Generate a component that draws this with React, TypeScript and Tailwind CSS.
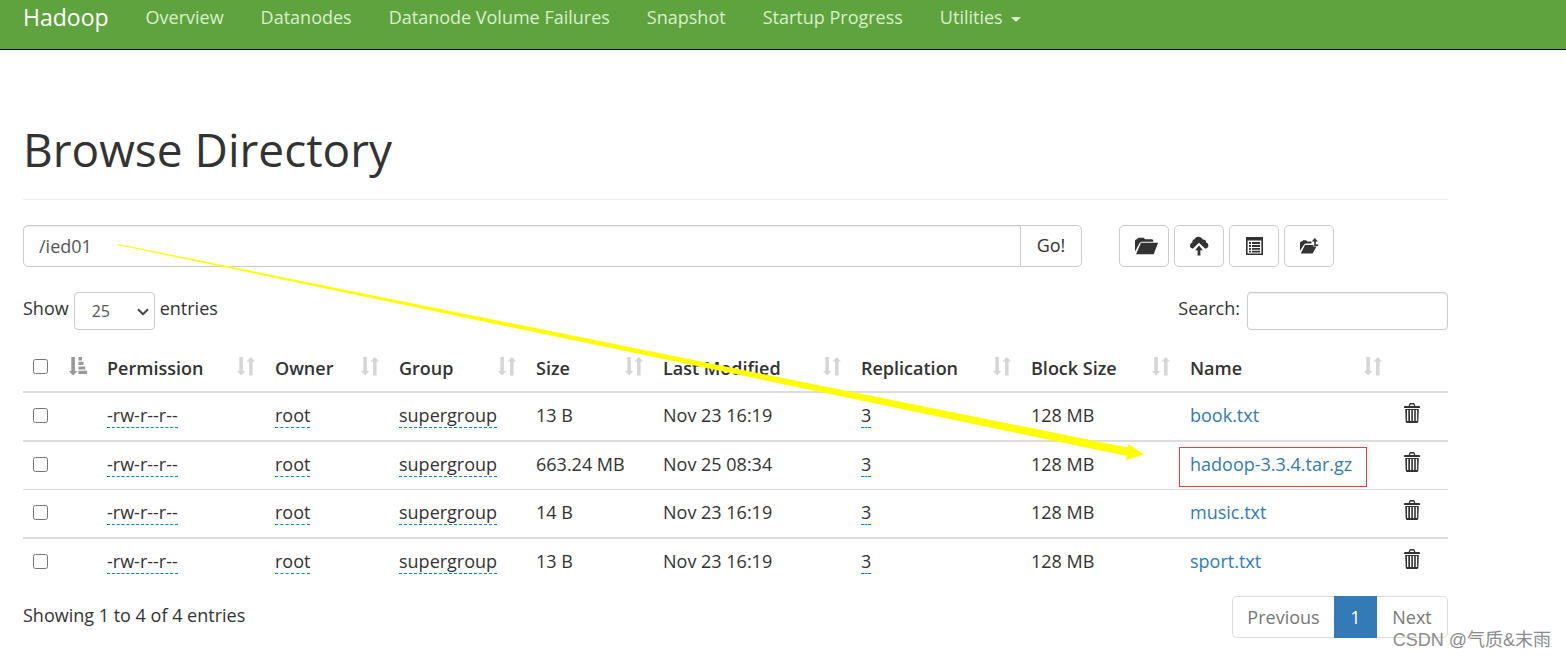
import React from "react";

const navLinks = ["Overview", "Datanodes", "Datanode Volume Failures", "Snapshot", "Startup Progress"];

const columns = [
  { label: "Permission", width: "w-[168px]" },
  { label: "Owner", width: "w-[124px]" },
  { label: "Group", width: "w-[137px]" },
  { label: "Size", width: "w-[127px]" },
  { label: "Last Modified", width: "w-[198px]" },
  { label: "Replication", width: "w-[170px]" },
  { label: "Block Size", width: "w-[159px]" },
  { label: "Name", width: "w-[212px]" },
];

const files = [
  { name: "book.txt", size: "13 B", modified: "Nov 23 16:19", row: "h-[49px]", line: "border-t-2" },
  { name: "hadoop-3.3.4.tar.gz", size: "663.24 MB", modified: "Nov 25 08:34", row: "h-[49px]", line: "border-t-2", marked: true },
  { name: "music.txt", size: "14 B", modified: "Nov 23 16:19", row: "h-[48px]", line: "border-t" },
  { name: "sport.txt", size: "13 B", modified: "Nov 23 16:19", row: "h-[49px]", line: "border-t-2" },
];

function SortIcon() {
  return (
    <svg viewBox="0 0 18 19" className="h-[19px] w-[18px] shrink-0 fill-[#d6d6d6]" aria-hidden="true">
      <path d="M2.3 0h3.6v14H8.4L4.1 18.6 0 14h2.3z" />
      <path d="M12 18.4h3.6V4.6H18L13.8 0 9.5 4.6H12z" />
    </svg>
  );
}

function SortAscIcon() {
  return (
    <svg viewBox="0 0 18 19" className="h-[19px] w-[18px] shrink-0 fill-[#999999]" aria-hidden="true">
      <path d="M2.3 0h3.6v14H8.4L4.1 18.6 0 14h2.3z" />
      <path d="M9.5 0h3.5v3.4H9.5zM9.5 4.7h5v3.4h-5zM9.5 9.4h6.7v3H9.5zM9.5 13.7h8.5v3.4H9.5z" />
    </svg>
  );
}

function FolderOpenIcon() {
  return (
    <svg viewBox="0 0 23 18" className="ml-1 h-[18px] w-[23px] fill-[#333333]" aria-hidden="true">
      <path d="M0 14.5V3.6L1.2 2.3H2L3.2.7h5.6L10 2.2h7.3l1 1.2v1.3H6.4L4.6 5.9z" />
      <path d="M6 5.8h17l-4.3 11.4H1z" />
    </svg>
  );
}

function CloudUploadIcon() {
  return (
    <svg viewBox="0 0 20 20" className="h-5 w-5 fill-[#333333]" aria-hidden="true">
      <path d="M4 12.4 10 6.8l6 5.6h.6a3 3 0 0 0 2.8-2.9 3 3 0 0 0-2.2-2.9 3.2 3.2 0 0 0-3.4-3.1A4.8 4.8 0 0 0 5.4 3.2a2.8 2.8 0 0 0-2 3.2A3.1 3.1 0 0 0 1 9.4a3 3 0 0 0 3 3z" />
      <path d="m10 9.6 3.9 4.6h-2.5v5.2H8.6v-5.2H6.1z" />
    </svg>
  );
}

function ListIcon() {
  return (
    <svg viewBox="0 0 17 18" className="h-[18px] w-[17px] fill-[#333333]" aria-hidden="true">
      <path fillRule="evenodd" d="M0 0h17v18H0zM1.6 3.4v13h13.8v-13z" />
      <path d="M3 5h2v2H3zM6 5h8v2H6zM3 8h2v2H3zM6 8h8v2H6zM3 11h2v1.7H3zM6 11h8v1.7H6zM3 13.7h2v1.7H3zM6 13.7h8v1.7H6z" />
    </svg>
  );
}

function FolderMoveIcon() {
  return (
    <svg viewBox="0 0 19 16" className="h-4 w-[19px] fill-[#333333]" aria-hidden="true">
      <path d="M0 12.8V4.4l1-1h1L3 2.2h3.2l1 1.2h4.2V5.4H5.2L3.8 7z" />
      <path d="M5 7h8.4l-.2 1.6h3.3L12.6 15.6H.8z" />
      <path d="M14.8 0 18 3.4h-2.2v3h2.4v1.5h-4V3.4h-2.5z" />
    </svg>
  );
}

function TrashIcon() {
  return (
    <svg viewBox="0 0 16 20" className="h-5 w-4 fill-[#333333]" aria-hidden="true">
      <path fillRule="evenodd" d="M0 5V3.5L1 3h3.6L5.5.6 6.5 0h3l1 .6.9 2.4H15l1 .5V5zM6 3h4l-.5-1.6h-3z" />
      <path fillRule="evenodd" d="M1.2 6h13.6l-.5 13-1 1H2.7l-1-1zM3 7v11h1.3V7zM6 7v11h1.3V7zM8.9 7v11h1.3V7zM11.8 7v11h1.3V7z" />
    </svg>
  );
}

const tool = "flex h-[42px] w-[50px] items-center justify-center rounded-[5px] border border-[#cccccc] bg-white";
const editable = "border-b border-dashed border-[#0088cc] text-[#333333]";

export default function App() {
  return (
    <div className="relative min-h-screen overflow-hidden bg-white font-['Open_Sans','Noto_Sans',sans-serif] text-lg leading-6 text-[#333333]">
      <nav className="flex h-[50px] items-start gap-[37px] border-b border-[#080808] bg-[#5fa33e] pt-[5px] pl-[23px] whitespace-nowrap text-[#d9f0cd]">
        <a href="#" className="text-[23px] leading-6 font-medium text-white">Hadoop</a>
        {navLinks.map((label) => (
          <a key={label} href="#">{label}</a>
        ))}
        <button type="button" className="flex items-center gap-2">
          Utilities
          <span className="mt-1 border-x-[5px] border-t-[5px] border-x-transparent border-t-[#d9f0cd]" />
        </button>
      </nav>

      <main className="pr-[118px] pl-[23px]">
        <header className="border-b border-[#eeeeee] pt-[67px] pb-[17px]">
          <h1 className="text-[46px] leading-[65px]">Browse Directory</h1>
        </header>

        <div className="mt-[25px] flex gap-[37px]">
          <form className="flex h-[42px] flex-1">
            <input
              aria-label="Directory"
              defaultValue="/ied01"
              className="min-w-0 flex-1 rounded-l-[5px] border border-[#cccccc] px-[15px] text-[#555555] shadow-[inset_0_1px_1px_rgba(0,0,0,0.075)]"
            />
            <button type="button" className="-ml-px w-[62px] rounded-r-[5px] border border-[#cccccc] bg-white pb-0.5">Go!</button>
          </form>
          <div className="flex w-[329px] gap-[5px]">
            <button type="button" aria-label="Open folder" className={tool}><FolderOpenIcon /></button>
            <button type="button" aria-label="Upload" className={tool}><CloudUploadIcon /></button>
            <button type="button" aria-label="List" className={tool}><ListIcon /></button>
            <button type="button" aria-label="Move" className={tool}><FolderMoveIcon /></button>
          </div>
        </div>

        <div className="mt-[25px] flex justify-between">
          <label className="flex gap-[5px]">
            <span className="pt-1">Show</span>
            <span className="relative">
              <select className="h-[38px] w-[81px] appearance-none rounded border border-[#cccccc] bg-white pl-[17px] text-base text-[#555555]">
                <option>25</option>
              </select>
              <svg viewBox="0 0 12 8" className="pointer-events-none absolute top-4 right-1.5 h-2 w-3 fill-none stroke-[#444444] stroke-2" aria-hidden="true">
                <path d="m1 1.2 5 5 5-5" />
              </svg>
            </span>
            <span className="pt-1">entries</span>
          </label>
          <label className="flex gap-[7px]">
            <span className="pt-1">Search:</span>
            <input type="search" className="h-[38px] w-[201px] rounded border border-[#cccccc] px-3 shadow-[inset_0_1px_1px_rgba(0,0,0,0.075)]" />
          </label>
        </div>

        <table className="mt-[15px] w-full table-fixed border-separate border-spacing-0 text-left whitespace-nowrap">
          <thead>
            <tr className="h-[46px]">
              <th className="w-[74px] p-0 pr-[10px] pl-[10px]">
                <div className="flex items-center justify-between pb-1">
                  <input type="checkbox" aria-label="Select all" className="block size-[15px]" />
                  <SortAscIcon />
                </div>
              </th>
              {columns.map((column) => (
                <th key={column.label} className={`${column.width} p-0 pr-[10px] pl-[10px] font-semibold`}>
                  <div className="flex items-center justify-between">
                    {column.label}
                    <span className="pb-1"><SortIcon /></span>
                  </div>
                </th>
              ))}
              <th className="w-[56px] p-0" aria-label="Delete" />
            </tr>
          </thead>
          <tbody className="[&_td]:border-[#dddddd] [&_td]:p-0 [&_td]:pb-[3px] [&_td]:pl-[10px]">
            {files.map((file) => (
              <tr key={file.name} className={file.row}>
                <td className={file.line}><input type="checkbox" aria-label={`Select ${file.name}`} className="block size-[15px]" /></td>
                <td className={file.line}><span className={editable}>-rw-r--r--</span></td>
                <td className={file.line}><span className={editable}>root</span></td>
                <td className={file.line}><span className={editable}>supergroup</span></td>
                <td className={file.line}>{file.size}</td>
                <td className={file.line}>{file.modified}</td>
                <td className={file.line}><span className={editable}>3</span></td>
                <td className={file.line}>128 MB</td>
                <td className={file.line}>
                  <span className="relative">
                    <a href="#" className="text-[#337ab7]">{file.name}</a>
                    {file.marked && <span className="pointer-events-none absolute -top-[5px] -left-[11px] h-10 w-[188px] border border-[#f23c3c]" />}
                  </span>
                </td>
                <td className={file.line}>
                  <button type="button" aria-label={`Delete ${file.name}`} className="ml-0.5 block pb-1"><TrashIcon /></button>
                </td>
              </tr>
            ))}
          </tbody>
        </table>

        <div className="mt-[10px] flex justify-between">
          <p className="pt-[7px]">Showing 1 to 4 of 4 entries</p>
          <div className="flex h-[42px] text-[#777777]">
            <button type="button" className="w-[102px] rounded-l-[5px] border border-r-0 border-[#dddddd]">Previous</button>
            <button type="button" className="w-[43px] bg-[#337ab7] text-white">1</button>
            <button type="button" className="w-[71px] rounded-r-[5px] border border-l-0 border-[#dddddd]">Next</button>
          </div>
        </div>
      </main>

      <svg viewBox="0 0 1030 220" className="pointer-events-none absolute top-[240px] left-[116px] h-[220px] w-[1030px] fill-[#ffff00]" aria-hidden="true">
        <path d="M2 4 1011.5 207.5 1012.5 204 1028 214.5 1010 220 1010.8 216 2 5z" />
      </svg>
      <div className="pointer-events-none absolute right-[15px] bottom-1 font-['Liberation_Sans','Noto_Sans_CJK_SC',sans-serif] text-lg leading-7 text-[#8c8c8c]">
        CSDN @气质&amp;末雨
      </div>
    </div>
  );
}
